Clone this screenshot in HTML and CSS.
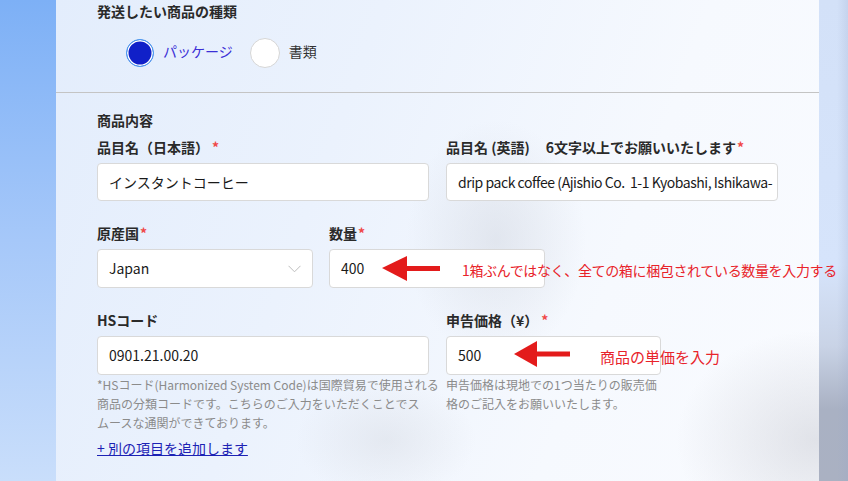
FILE: index.html
```html
<!DOCTYPE html>
<html lang="ja">
<head>
<meta charset="utf-8">
<title>商品内容</title>
<link rel="stylesheet" href="styles.css">
</head>
<body>
<div class="page">
  <div class="side-left"></div>
  <main class="panel">
    <section class="kind">
      <h2 class="title">発送したい商品の種類</h2>
      <div class="radios">
        <label class="radio checked"><span class="dot"></span><span class="radio-text">パッケージ</span></label>
        <label class="radio"><span class="dot"></span><span class="radio-text">書類</span></label>
      </div>
    </section>
    <section class="items">
      <h2 class="title">商品内容</h2>
      <div class="row two">
        <div class="field">
          <div class="label">品目名（日本語）<span class="req">*</span></div>
          <div class="input">インスタントコーヒー</div>
        </div>
        <div class="field">
          <div class="label">品目名 (英語)&nbsp;&nbsp;&nbsp;&nbsp; 6文字以上でお願いいたします<span class="req tight">*</span></div>
          <div class="input narrow-text">drip pack coffee (Ajishio Co.&nbsp; 1-1 Kyobashi, Ishikawa-</div>
        </div>
      </div>
      <div class="row three">
        <div class="field">
          <div class="label">原産国<span class="req tight">*</span></div>
          <div class="input tall select">Japan
            <svg class="chev" width="13" height="8" viewBox="0 0 13 8"><path d="M0.5 0.8 L6.5 6.8 L12.5 0.8" fill="none" stroke="#bdbdbd" stroke-width="1"/></svg>
          </div>
        </div>
        <div class="field">
          <div class="label">数量<span class="req tight">*</span></div>
          <div class="input tall">400</div>
        </div>
      </div>
      <div class="row two">
        <div class="field">
          <div class="label">HSコード</div>
          <div class="input tall">0901.21.00.20</div>
          <p class="help">*HSコード(Harmonized System Code)は国際貿易で使用される<br>商品の分類コードです。こちらのご入力をいただくことでス<br>ムースな通関ができております。</p>
          <a class="add" href="#">+ 別の項目を追加します</a>
        </div>
        <div class="field">
          <div class="label">申告価格（¥）<span class="req">*</span></div>
          <div class="input tall short">500</div>
          <p class="help">申告価格は現地での1つ当たりの販売価<br>格のご記入をお願いいたします。</p>
        </div>
      </div>
    </section>

    <svg class="arrow arrow-qty" width="60" height="26" viewBox="0 0 60 26"><polygon points="0,12 25,0 25,25" fill="#e31b1b"/><rect x="24" y="10" width="34" height="5" fill="#e31b1b"/></svg>
    <div class="note note-qty">1箱ぶんではなく、全ての箱に梱包されている数量を入力する</div>
    <svg class="arrow arrow-price" width="58" height="28" viewBox="0 0 58 28"><polygon points="0,13 23,0 23,26" fill="#e31b1b"/><rect x="22" y="10.5" width="34" height="5" fill="#e31b1b"/></svg>
    <div class="note note-price">商品の単価を入力</div>
  </main>
  <div class="side-right"></div>
</div>
</body>
</html>
```
FILE: styles.css
```css
html, body {
  margin: 0;
  padding: 0;
  height: 100%;
}
body {
  font-family: "Noto Sans CJK JP", "Noto Sans", sans-serif;
  color: #222;
  overflow: hidden;
}
.page {
  display: flex;
  width: 848px;
  height: 481px;
}
.side-left {
  width: 56px;
  flex: none;
  background: linear-gradient(180deg, #7db0f6 0%, #a6c8f9 50%, #c9defb 100%);
}
.side-right {
  width: 30px;
  flex: none;
  background:
    linear-gradient(90deg, rgba(255,255,255,0) 60%, rgba(150,165,200,0.25) 100%),
    linear-gradient(180deg, #d3e1f8 0%, #d6e4fb 55%, #c9d3e6 72%, #a9b1c3 85%, #aab1c2 100%);
}
.panel {
  flex: 1;
  position: relative;
  background:
    radial-gradient(ellipse 90px 120px at 440px 240px, rgba(205,210,220,0.45), rgba(205,210,220,0) 100%),
    radial-gradient(ellipse 140px 110px at 760px 440px, rgba(200,202,210,0.5), rgba(200,202,210,0) 100%),
    radial-gradient(ellipse 90px 60px at 330px 440px, rgba(210,214,222,0.4), rgba(210,214,222,0) 100%),
    linear-gradient(110deg, #e3edfc 0%, #ebf2fd 35%, #f6f9fe 70%, #f9fbff 100%);
}
.title {
  margin: 0;
  font-size: 14px;
  font-weight: 700;
  line-height: 20px;
  color: #2a2a2a;
}
.kind {
  padding: 1px 41px 24px;
  border-bottom: 1px solid #c4c4c4;
}
.radios {
  display: flex;
  align-items: center;
  gap: 17px;
  margin-top: 17px;
  padding-left: 29px;
}
.radio {
  display: flex;
  align-items: center;
  gap: 9px;
  font-size: 14px;
  color: #333;
}
.radio-text {
  position: relative;
  top: -2px;
}
.dot {
  width: 28px;
  height: 28px;
  border-radius: 50%;
  border: 1px solid #d6d6d6;
  background: #fff;
  box-sizing: content-box;
}
.checked .dot {
  width: 26px;
  height: 26px;
  border: 1.5px solid #4a9ff2;
  background: #1020c8;
  box-shadow: inset 0 0 0 1.5px #fff;
}
.checked .radio-text {
  color: #3b2fd6;
}
.items {
  padding: 17px 41px 0;
}
.items .title {
  margin-bottom: 7px;
}
.row {
  display: grid;
  row-gap: 0;
  margin-bottom: 22px;
}
.row.two {
  grid-template-columns: 332px 332px;
  column-gap: 17px;
}
.row.three {
  grid-template-columns: 216px 216px;
  column-gap: 16px;
}
.field {
  display: flex;
  flex-direction: column;
}
.label {
  font-size: 14px;
  font-weight: 700;
  line-height: 20px;
  color: #2a2a2a;
  margin-bottom: 6px;
  white-space: nowrap;
}
.req {
  color: #f04848;
  margin-left: 3px;
  font-weight: 700;
}
.req.tight {
  margin-left: 1px;
}
.input {
  position: relative;
  height: 38px;
  box-sizing: border-box;
  background: #fff;
  border: 1px solid #d9d9d9;
  border-radius: 4px;
  padding: 0 11px;
  font-size: 14px;
  line-height: 36px;
  color: #1a1a1a;
  white-space: nowrap;
  overflow: hidden;
}
.input.narrow-text {
  letter-spacing: -0.45px;
}
.input.tall {
  height: 39px;
  line-height: 37px;
}
.input.short {
  width: 215px;
}
.chev {
  position: absolute;
  right: 11px;
  top: 15px;
}
.help {
  margin: 0;
  font-size: 12px;
  line-height: 19px;
  color: #8b8b8b;
  white-space: nowrap;
}
.add {
  margin-top: 6px;
  align-self: flex-start;
  font-size: 14px;
  line-height: 20px;
  color: #1c22b4;
  text-decoration: underline;
}
.arrow {
  position: absolute;
  z-index: 2;
}
.arrow-qty {
  left: 326px;
  top: 256px;
}
.arrow-price {
  left: 458px;
  top: 341px;
}
.note {
  position: absolute;
  z-index: 2;
  color: #e8232a;
  white-space: nowrap;
}
.note-qty {
  left: 406px;
  top: 260px;
  font-size: 14px;
  line-height: 20px;
  letter-spacing: -0.35px;
}
.note-price {
  left: 544px;
  top: 346px;
  font-size: 15px;
  line-height: 22px;
}
```
